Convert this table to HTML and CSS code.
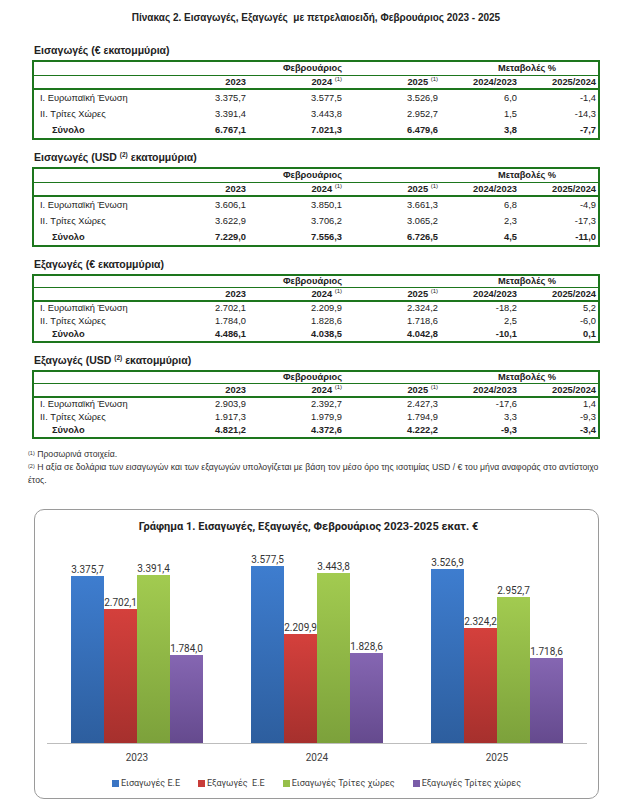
FILE: index.html
```html
<!DOCTYPE html>
<html lang="el">
<head>
    <meta charset="UTF-8">
    <meta name="viewport" content="width=device-width, initial-scale=1.0">
    <title>Πίνακας 2. Εισαγωγές, Εξαγωγές με πετρελαιοειδή</title>
    <link rel="stylesheet" href="styles.css">
</head>
<body>
    <div class="page">
        <h1 class="page-title">Πίνακας 2. Εισαγωγές, Εξαγωγές&nbsp; με πετρελαιοειδή, Φεβρουάριος 2023 - 2025</h1>

        <div class="section">
            <h2 class="section-title">Εισαγωγές (€ εκατομμύρια)</h2>
            <table class="data-table">
                <colgroup>
                    <col class="c-label"><col class="c-year"><col class="c-mid"><col class="c-mid"><col class="c-chg"><col class="c-chg">
                </colgroup>
                <tr class="head1"><td></td><td></td><td class="num">Φεβρουάριος</td><td></td><td colspan="2" class="chg-head">Μεταβολές %</td></tr>
                <tr class="head2"><td></td><td class="num">2023</td><td class="num">2024 <sup>(1)</sup></td><td class="num">2025 <sup>(1)</sup></td><td class="num">2024/2023</td><td class="num">2025/2024</td></tr>
                <tr><td class="label">I. Ευρωπαϊκή Ένωση</td><td class="num">3.375,7</td><td class="num">3.577,5</td><td class="num">3.526,9</td><td class="num">6,0</td><td class="num">-1,4</td></tr>
                <tr><td class="label">II. Τρίτες Χώρες</td><td class="num">3.391,4</td><td class="num">3.443,8</td><td class="num">2.952,7</td><td class="num">1,5</td><td class="num">-14,3</td></tr>
                <tr class="total"><td class="label">Σύνολο</td><td class="num">6.767,1</td><td class="num">7.021,3</td><td class="num">6.479,6</td><td class="num">3,8</td><td class="num">-7,7</td></tr>
            </table>
        </div>

        <div class="section">
            <h2 class="section-title">Εισαγωγές (USD <sup>(2)</sup> εκατομμύρια)</h2>
            <table class="data-table">
                <colgroup>
                    <col class="c-label"><col class="c-year"><col class="c-mid"><col class="c-mid"><col class="c-chg"><col class="c-chg">
                </colgroup>
                <tr class="head1"><td></td><td></td><td class="num">Φεβρουάριος</td><td></td><td colspan="2" class="chg-head">Μεταβολές %</td></tr>
                <tr class="head2"><td></td><td class="num">2023</td><td class="num">2024 <sup>(1)</sup></td><td class="num">2025 <sup>(1)</sup></td><td class="num">2024/2023</td><td class="num">2025/2024</td></tr>
                <tr><td class="label">I. Ευρωπαϊκή Ένωση</td><td class="num">3.606,1</td><td class="num">3.850,1</td><td class="num">3.661,3</td><td class="num">6,8</td><td class="num">-4,9</td></tr>
                <tr><td class="label">II. Τρίτες Χώρες</td><td class="num">3.622,9</td><td class="num">3.706,2</td><td class="num">3.065,2</td><td class="num">2,3</td><td class="num">-17,3</td></tr>
                <tr class="total"><td class="label">Σύνολο</td><td class="num">7.229,0</td><td class="num">7.556,3</td><td class="num">6.726,5</td><td class="num">4,5</td><td class="num">-11,0</td></tr>
            </table>
        </div>

        <div class="section">
            <h2 class="section-title">Εξαγωγές (€ εκατομμύρια)</h2>
            <table class="data-table compact">
                <colgroup>
                    <col class="c-label"><col class="c-year"><col class="c-mid"><col class="c-mid"><col class="c-chg"><col class="c-chg">
                </colgroup>
                <tr class="head1"><td></td><td></td><td class="num">Φεβρουάριος</td><td></td><td colspan="2" class="chg-head">Μεταβολές %</td></tr>
                <tr class="head2"><td></td><td class="num">2023</td><td class="num">2024 <sup>(1)</sup></td><td class="num">2025 <sup>(1)</sup></td><td class="num">2024/2023</td><td class="num">2025/2024</td></tr>
                <tr><td class="label">I. Ευρωπαϊκή Ένωση</td><td class="num">2.702,1</td><td class="num">2.209,9</td><td class="num">2.324,2</td><td class="num">-18,2</td><td class="num">5,2</td></tr>
                <tr><td class="label">II. Τρίτες Χώρες</td><td class="num">1.784,0</td><td class="num">1.828,6</td><td class="num">1.718,6</td><td class="num">2,5</td><td class="num">-6,0</td></tr>
                <tr class="total"><td class="label">Σύνολο</td><td class="num">4.486,1</td><td class="num">4.038,5</td><td class="num">4.042,8</td><td class="num">-10,1</td><td class="num">0,1</td></tr>
            </table>
        </div>

        <div class="section">
            <h2 class="section-title">Εξαγωγές (USD <sup>(2)</sup> εκατομμύρια)</h2>
            <table class="data-table compact">
                <colgroup>
                    <col class="c-label"><col class="c-year"><col class="c-mid"><col class="c-mid"><col class="c-chg"><col class="c-chg">
                </colgroup>
                <tr class="head1"><td></td><td></td><td class="num">Φεβρουάριος</td><td></td><td colspan="2" class="chg-head">Μεταβολές %</td></tr>
                <tr class="head2"><td></td><td class="num">2023</td><td class="num">2024 <sup>(1)</sup></td><td class="num">2025 <sup>(1)</sup></td><td class="num">2024/2023</td><td class="num">2025/2024</td></tr>
                <tr><td class="label">I. Ευρωπαϊκή Ένωση</td><td class="num">2.903,9</td><td class="num">2.392,7</td><td class="num">2.427,3</td><td class="num">-17,6</td><td class="num">1,4</td></tr>
                <tr><td class="label">II. Τρίτες Χώρες</td><td class="num">1.917,3</td><td class="num">1.979,9</td><td class="num">1.794,9</td><td class="num">3,3</td><td class="num">-9,3</td></tr>
                <tr class="total"><td class="label">Σύνολο</td><td class="num">4.821,2</td><td class="num">4.372,6</td><td class="num">4.222,2</td><td class="num">-9,3</td><td class="num">-3,4</td></tr>
            </table>
        </div>

        <div class="notes">
            <p><sup>(1)</sup> Προσωρινά στοιχεία.</p>
            <p><sup>(2)</sup> Η αξία σε δολάρια των εισαγωγών και των εξαγωγών υπολογίζεται με βάση τον μέσο όρο της ισοτιμίας USD / € του μήνα αναφοράς στο αντίστοιχο έτος.</p>
        </div>

        <div class="chart">
            <div class="chart-title">Γράφημα 1. Εισαγωγές, Εξαγωγές, Φεβρουάριος 2023-2025 εκατ. €</div>
            <div class="plot">
                <div class="group">
                    <div class="bar-col"><span class="val">3.375,7</span><div class="bar imp-eu" style="height:167px"></div></div>
                    <div class="bar-col"><span class="val">2.702,1</span><div class="bar exp-eu" style="height:134px"></div></div>
                    <div class="bar-col"><span class="val">3.391,4</span><div class="bar imp-tc" style="height:168px"></div></div>
                    <div class="bar-col"><span class="val">1.784,0</span><div class="bar exp-tc" style="height:88px"></div></div>
                </div>
                <div class="group">
                    <div class="bar-col"><span class="val">3.577,5</span><div class="bar imp-eu" style="height:177px"></div></div>
                    <div class="bar-col"><span class="val">2.209,9</span><div class="bar exp-eu" style="height:109px"></div></div>
                    <div class="bar-col"><span class="val">3.443,8</span><div class="bar imp-tc" style="height:170px"></div></div>
                    <div class="bar-col"><span class="val">1.828,6</span><div class="bar exp-tc" style="height:90px"></div></div>
                </div>
                <div class="group">
                    <div class="bar-col"><span class="val">3.526,9</span><div class="bar imp-eu" style="height:174px"></div></div>
                    <div class="bar-col"><span class="val">2.324,2</span><div class="bar exp-eu" style="height:115px"></div></div>
                    <div class="bar-col"><span class="val">2.952,7</span><div class="bar imp-tc" style="height:146px"></div></div>
                    <div class="bar-col"><span class="val">1.718,6</span><div class="bar exp-tc" style="height:85px"></div></div>
                </div>
            </div>
            <div class="axis"></div>
            <div class="years"><span>2023</span><span>2024</span><span>2025</span></div>
            <div class="legend">
                <span class="key"><i class="sw imp-eu-sw"></i>Εισαγωγές Ε.Ε</span>
                <span class="key"><i class="sw exp-eu-sw"></i>Εξαγωγές&nbsp; Ε.Ε</span>
                <span class="key"><i class="sw imp-tc-sw"></i>Εισαγωγές Τρίτες χώρες</span>
                <span class="key"><i class="sw exp-tc-sw"></i>Εξαγωγές Τρίτες χώρες</span>
            </div>
        </div>
    </div>
</body>
</html>
```

FILE: styles.css
```css
body {
    margin: 0;
    padding: 0;
    background: #fff;
    color: #222;
    font-family: "Liberation Sans", Arial, sans-serif;
}
.page {
    width: 568px;
    padding: 12px 29px 0 32px;
}
.page-title {
    margin: 0;
    font-size: 10px;
    line-height: 12px;
    text-align: center;
    font-weight: bold;
}
.section {
    margin-top: 11px;
}
.section:first-of-type {
    margin-top: 20px;
}
.section-title {
    margin: 0 0 4px 2px;
    font-size: 10.5px;
    line-height: 12px;
    font-weight: bold;
}
.section-title sup {
    font-size: 6.5px;
    line-height: 0;
    vertical-align: 4px;
}

/* tables */
.data-table {
    width: 568px;
    table-layout: fixed;
    border-collapse: separate;
    border-spacing: 0;
    border: 2px solid #1d761d;
    font-size: 9.3px;
}
.c-label { width: 116px; }
.c-year { width: 98px; }
.c-mid { width: 96px; }
.c-chg { width: 79px; }
.data-table td {
    padding: 0 2px 0 0;
    line-height: 16px;
    white-space: nowrap;
    vertical-align: middle;
}
.data-table .head1 td {
    line-height: 13px;
    border-bottom: 1px solid #1d761d;
    font-weight: bold;
}
.data-table .head2 td {
    line-height: 12px;
    border-bottom: 2px solid #1d761d;
    font-weight: bold;
}
.data-table.compact td {
    line-height: 13px;
}
.data-table.compact .head1 td {
    line-height: 11px;
}
.data-table.compact .head2 td {
    line-height: 12px;
}
.data-table sup {
    font-size: 6px;
    font-weight: normal;
    line-height: 0;
    vertical-align: 4px;
}
.num {
    text-align: right;
}
.chg-head {
    text-align: center;
    padding-left: 18px !important;
}
.data-table td.label {
    padding-left: 6px;
}
.total td {
    font-weight: bold;
}
.data-table .total td.label {
    padding-left: 18px;
}

/* notes */
.notes {
    margin: 9px -8px 0 -4px;
    font-size: 8.7px;
    color: #333;
}
.notes p {
    margin: 0;
    line-height: 13px;
}
.notes p + p {
    line-height: 12.5px;
}
.notes sup {
    font-size: 5.5px;
    line-height: 0;
    vertical-align: 2px;
}

/* chart */
.chart {
    margin: 23px 1px 0 2px;
    border: 1px solid #9a9a9a;
    border-radius: 10px;
    padding: 11px 0 9px 0;
    font-family: Roboto, "Noto Sans", sans-serif;
    color: #404040;
}
.chart-title {
    text-align: center;
    font-size: 11px;
    line-height: 12px;
    font-weight: bold;
    color: #222;
    padding-right: 16px;
}
.plot {
    display: flex;
    height: 210px;
    margin: 0 11px 0 12px;
}
.group {
    flex: 1;
    display: flex;
    justify-content: center;
    align-items: flex-end;
}
.bar-col {
    width: 33px;
    display: flex;
    flex-direction: column;
    align-items: center;
}
.val {
    white-space: nowrap;
    font-size: 10px;
    line-height: 10px;
    margin-bottom: 1px;
    color: #333;
}
.bar {
    width: 33px;
}
.imp-eu { background: linear-gradient(#3e7dcf, #2d5e9e); }
.exp-eu { background: linear-gradient(#d4403c, #a6302d); }
.imp-tc { background: linear-gradient(#a2cb50, #7ca13b); }
.exp-tc { background: linear-gradient(#8566b2, #654a8e); }
.axis {
    height: 1px;
    background: #bdbdbd;
    margin: 0 11px 0 12px;
}
.years {
    display: flex;
    margin: 8px 11px 0 12px;
    font-size: 10px;
    line-height: 12px;
}
.years span {
    flex: 1;
    text-align: center;
}
.legend {
    display: flex;
    justify-content: center;
    gap: 18px;
    margin-top: 13px;
    font-size: 9px;
    line-height: 12px;
}
.key {
    display: flex;
    align-items: center;
    white-space: nowrap;
}
.sw {
    display: inline-block;
    width: 7px;
    height: 7px;
    margin-right: 2px;
}
.imp-eu-sw { background: #3a75c4; }
.exp-eu-sw { background: #c83c39; }
.imp-tc-sw { background: #96bf4a; }
.exp-tc-sw { background: #7a5ca8; }
```
